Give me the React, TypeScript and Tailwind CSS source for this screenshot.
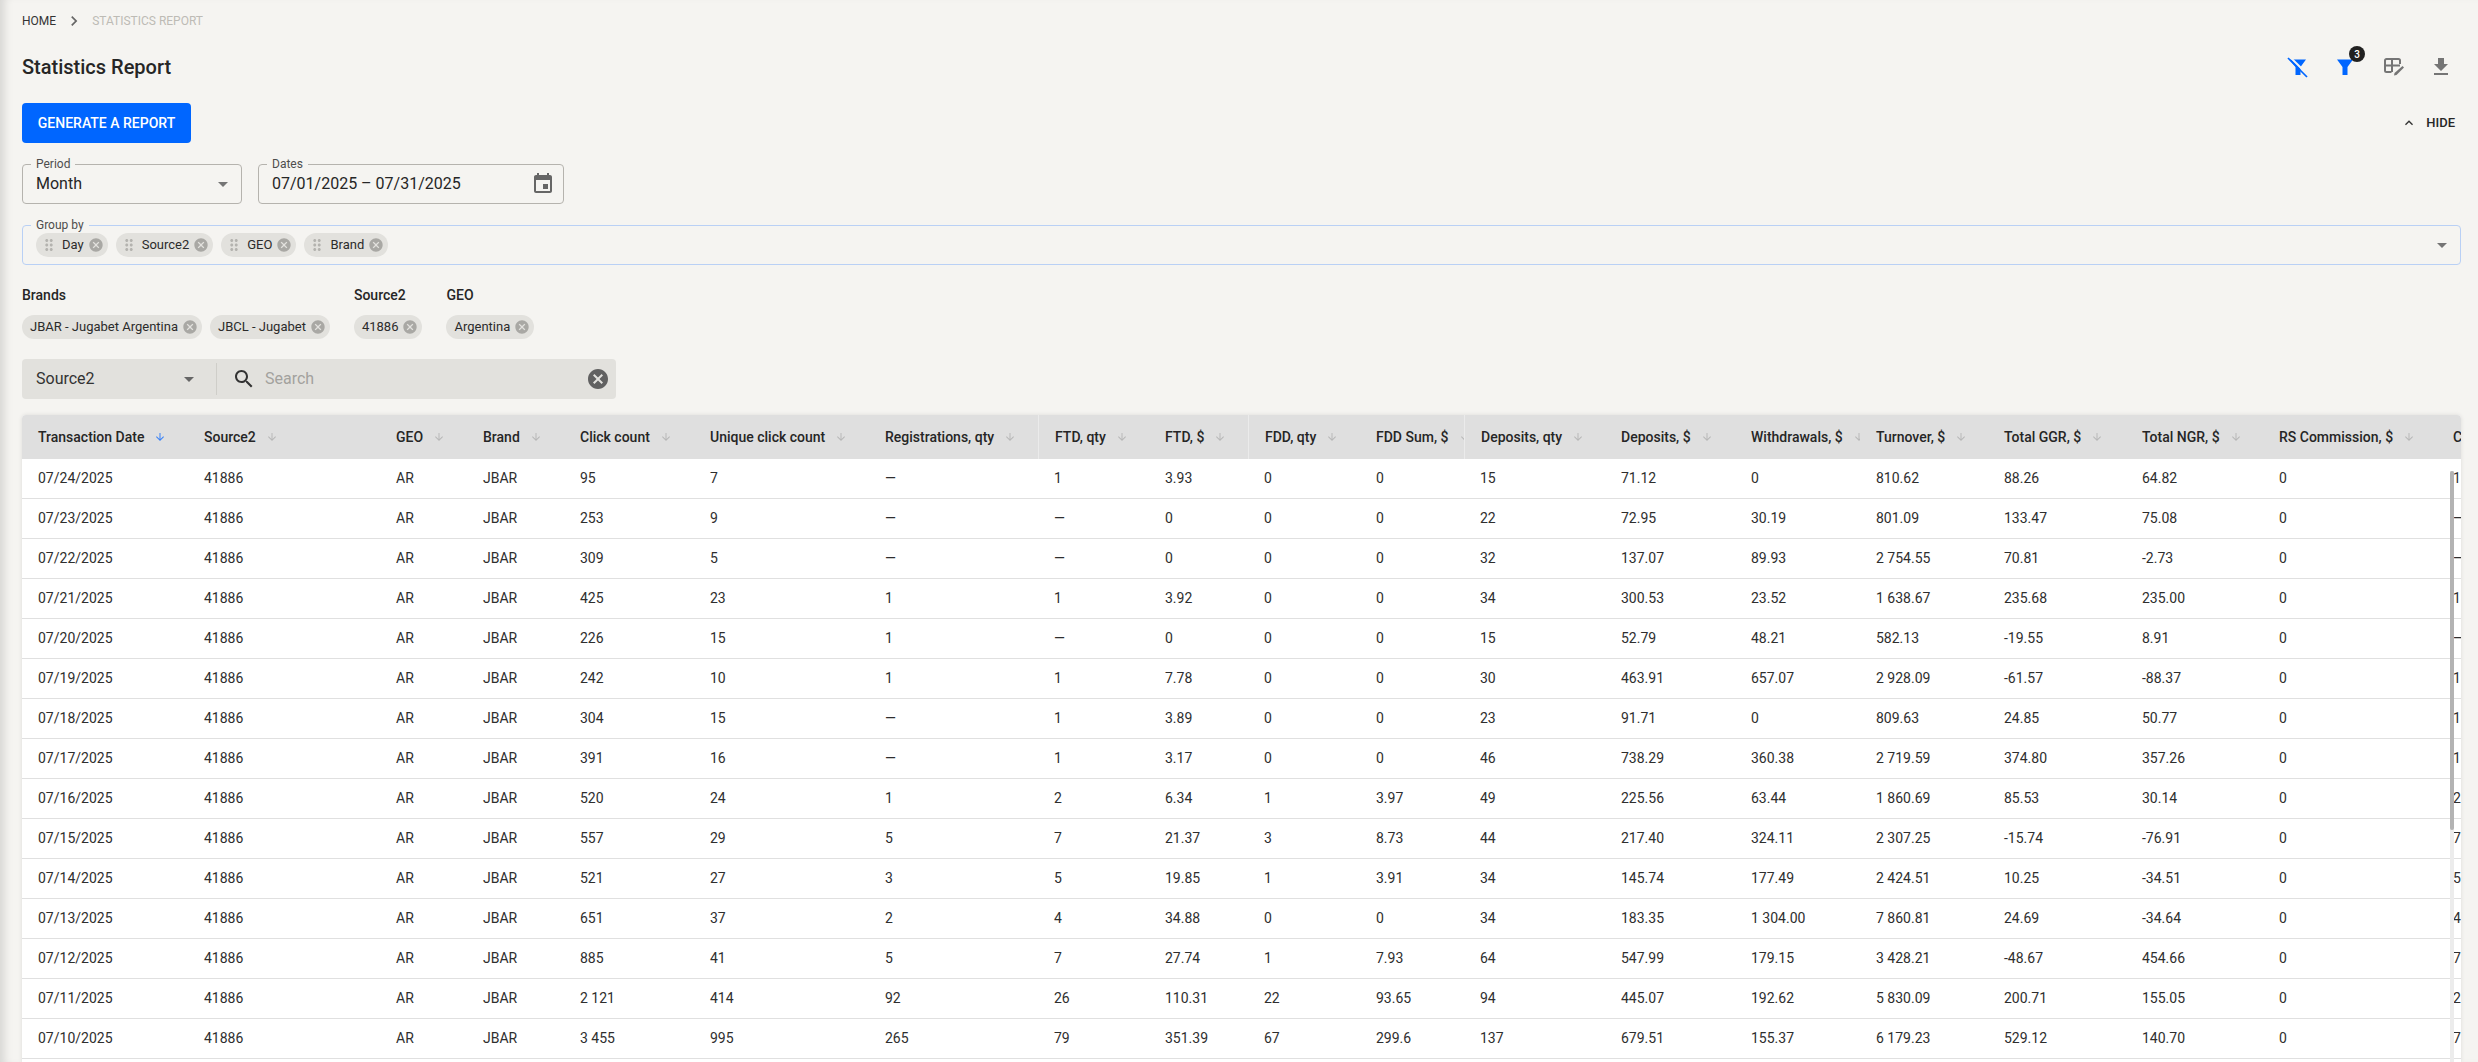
import React from "react";

const P = {
  cancel: "M12 2C6.47 2 2 6.47 2 12s4.47 10 10 10 10-4.47 10-10S17.53 2 12 2zm5 13.59L15.59 17 12 13.41 8.41 17 7 15.59 10.59 12 7 8.41 8.41 7 12 10.59 15.59 7 17 8.41 13.41 12 17 15.59z",
  drag: "M11 18c0 1.1-.9 2-2 2s-2-.9-2-2 .9-2 2-2 2 .9 2 2zm-2-8c-1.1 0-2 .9-2 2s.9 2 2 2 2-.9 2-2-.9-2-2-2zm0-6c-1.1 0-2 .9-2 2s.9 2 2 2 2-.9 2-2-.9-2-2-2zm6 4c1.1 0 2-.9 2-2s-.9-2-2-2-2 .9-2 2 .9 2 2 2zm0 2c-1.1 0-2 .9-2 2s.9 2 2 2 2-.9 2-2-.9-2-2-2zm0 6c-1.1 0-2 .9-2 2s.9 2 2 2 2-.9 2-2-.9-2-2-2z",
  drop: "M7 10l5 5 5-5z",
  event: "M17 12h-5v5h5v-5zM16 1v2H8V1H6v2H5c-1.11 0-1.99.9-1.99 2L3 19c0 1.1.89 2 2 2h14c1.1 0 2-.9 2-2V5c0-1.1-.9-2-2-2h-1V1h-2zm3 18H5V8h14v11z",
  search: "M15.5 14h-.79l-.28-.27C15.41 12.59 16 11.11 16 9.5 16 5.91 13.09 3 9.5 3S3 5.91 3 9.5 5.91 16 9.5 16c1.61 0 3.09-.59 4.23-1.57l.27.28v.79l5 4.99L20.49 19l-4.99-5zm-6 0C7.01 14 5 11.99 5 9.5S7.01 5 9.5 5 14 7.01 14 9.5 11.99 14 9.5 14z",
  chevron: "M10 6L8.59 7.41 13.17 12l-4.58 4.59L10 18l6-6z",
  less: "M12 8l-6 6 1.41 1.41L12 10.83l4.59 4.58L18 14z",
  down: "M20 12l-1.41-1.41L13 16.17V4h-2v12.17l-5.58-5.59L4 12l8 8 8-8z",
  download: "M5 20h14v-2H5v2zM19 9h-4V3H9v6H5l7 7 7-7z",
};

function Ico({ d, className }: { d: string; className: string }) {
  return (
    <svg viewBox="0 0 24 24" fill="currentColor" className={"shrink-0 " + className}>
      <path d={d} />
    </svg>
  );
}

function Chip({ label, drag }: { label: string; drag?: boolean }) {
  return (
    <div className={"flex h-6 items-center rounded-full bg-[#e2e1dd] pr-1 text-[13px] text-[#2b2b2b] " + (drag ? "pl-1" : "pl-2")}>
      {drag && <Ico d={P.drag} className="mr-1 h-[18px] w-[18px] text-[#b4b3af]" />}
      <span className="mr-1 whitespace-nowrap">{label}</span>
      <Ico d={P.cancel} className="h-4 w-4 text-[#a9a8a4]" />
    </div>
  );
}

function Field({ label, className, children }: { label: string; className: string; children: React.ReactNode }) {
  return (
    <div className={"relative flex h-10 items-center rounded border " + className}>
      <span className="absolute left-[8px] top-[-9px] bg-[#f5f4f1] px-[5px] text-xs leading-[16px] text-[#4d4d4d]">{label}</span>
      {children}
    </div>
  );
}

const cols: { t: string; w: string; sep?: boolean }[] = [
  { t: "Transaction Date", w: "w-[166px]" },
  { t: "Source2", w: "w-[192px]" },
  { t: "GEO", w: "w-[87px]" },
  { t: "Brand", w: "w-[97px]" },
  { t: "Click count", w: "w-[130px]" },
  { t: "Unique click count", w: "w-[175px]" },
  { t: "Registrations, qty", w: "w-[169px]" },
  { t: "FTD, qty", w: "w-[111px]", sep: true },
  { t: "FTD, $", w: "w-[99px]" },
  { t: "FDD, qty", w: "w-[112px]", sep: true },
  { t: "FDD Sum, $", w: "w-[104px]" },
  { t: "Deposits, qty", w: "w-[141px]", sep: true },
  { t: "Deposits, $", w: "w-[130px]" },
  { t: "Withdrawals, $", w: "w-[125px]" },
  { t: "Turnover, $", w: "w-[128px]" },
  { t: "Total GGR, $", w: "w-[138px]" },
  { t: "Total NGR, $", w: "w-[137px]" },
  { t: "RS Commission, $", w: "w-[174px]" },
  { t: "C", w: "w-[24px]" },
];

const rows: string[][] = [
  ["07/24/2025", "95", "7", "—", "1", "3.93", "0", "0", "15", "71.12", "0", "810.62", "88.26", "64.82", "0", "1"],
  ["07/23/2025", "253", "9", "—", "—", "0", "0", "0", "22", "72.95", "30.19", "801.09", "133.47", "75.08", "0", "—"],
  ["07/22/2025", "309", "5", "—", "—", "0", "0", "0", "32", "137.07", "89.93", "2 754.55", "70.81", "-2.73", "0", "—"],
  ["07/21/2025", "425", "23", "1", "1", "3.92", "0", "0", "34", "300.53", "23.52", "1 638.67", "235.68", "235.00", "0", "1"],
  ["07/20/2025", "226", "15", "1", "—", "0", "0", "0", "15", "52.79", "48.21", "582.13", "-19.55", "8.91", "0", "—"],
  ["07/19/2025", "242", "10", "1", "1", "7.78", "0", "0", "30", "463.91", "657.07", "2 928.09", "-61.57", "-88.37", "0", "1"],
  ["07/18/2025", "304", "15", "—", "1", "3.89", "0", "0", "23", "91.71", "0", "809.63", "24.85", "50.77", "0", "1"],
  ["07/17/2025", "391", "16", "—", "1", "3.17", "0", "0", "46", "738.29", "360.38", "2 719.59", "374.80", "357.26", "0", "1"],
  ["07/16/2025", "520", "24", "1", "2", "6.34", "1", "3.97", "49", "225.56", "63.44", "1 860.69", "85.53", "30.14", "0", "2"],
  ["07/15/2025", "557", "29", "5", "7", "21.37", "3", "8.73", "44", "217.40", "324.11", "2 307.25", "-15.74", "-76.91", "0", "7"],
  ["07/14/2025", "521", "27", "3", "5", "19.85", "1", "3.91", "34", "145.74", "177.49", "2 424.51", "10.25", "-34.51", "0", "5"],
  ["07/13/2025", "651", "37", "2", "4", "34.88", "0", "0", "34", "183.35", "1 304.00", "7 860.81", "24.69", "-34.64", "0", "4"],
  ["07/12/2025", "885", "41", "5", "7", "27.74", "1", "7.93", "64", "547.99", "179.15", "3 428.21", "-48.67", "454.66", "0", "7"],
  ["07/11/2025", "2 121", "414", "92", "26", "110.31", "22", "93.65", "94", "445.07", "192.62", "5 830.09", "200.71", "155.05", "0", "2"],
  ["07/10/2025", "3 455", "995", "265", "79", "351.39", "67", "299.6", "137", "679.51", "155.37", "6 179.23", "529.12", "140.70", "0", "7"],
];

export default function App() {
  return (
    <div className="flex h-screen flex-col overflow-hidden bg-[#f5f4f1] pl-[22px] pr-[17px] font-['Roboto',sans-serif] text-[#262626] shadow-[inset_10px_0_10px_-6px_rgba(0,0,0,0.13)]">
      <nav className="flex h-[42px] shrink-0 items-center text-xs uppercase">
        <span className="text-[#333333]">Home</span>
        <Ico d={P.chevron} className="mx-2 h-5 w-5 text-[#666666]" />
        <span className="text-[#bdbbb5]">Statistics Report</span>
      </nav>

      <div className="flex h-[50px] shrink-0 items-center justify-between">
        <h1 className="text-xl font-medium text-[#262626]">Statistics Report</h1>
        <div className="mr-[-4px] flex items-center">
          <div className="flex h-12 w-[49px] items-center justify-center text-[#0066ff]">
            <svg viewBox="0 0 24 24" className="h-6 w-6">
              <path fill="currentColor" d="M4 4.500h17L15.500 12v8h-5v-8z" />
              <path stroke="#f5f4f1" strokeWidth="2" d="M4.500 1.500l19 19" />
              <path stroke="currentColor" strokeWidth="1.700" d="M3 3l19 19" />
            </svg>
          </div>
          <div className="relative flex h-12 w-[48px] items-center justify-center text-[#0066ff]">
            <svg viewBox="0 0 24 24" className="h-6 w-6">
              <path fill="currentColor" d="M4 4.500h16L14.500 12v8h-5v-8z" />
            </svg>
            <span className="absolute left-[28px] top-[3px] flex h-4 w-4 items-center justify-center rounded-full bg-[#212121] text-[10px] font-medium text-white">3</span>
          </div>
          <div className="flex h-12 w-[47px] items-center justify-center text-[#757575]">
            <svg viewBox="0 0 24 24" className="h-6 w-6" fill="none" stroke="currentColor">
              <path strokeWidth="2" d="M10.500 17H5.500A1.500 1.500 0 0 1 4 15.500v-10A1.500 1.500 0 0 1 5.500 4h12A1.500 1.500 0 0 1 19 5.500V9M4 10.500h15M11 4.500V17" />
              <path fill="currentColor" stroke="none" d="M21.500 11l1.500 1.500-7.500 7.500-2.500.5.500-2.500z" />
            </svg>
          </div>
          <div className="flex h-12 w-[49px] items-center justify-center text-[#757575]">
            <Ico d={P.download} className="h-6 w-6" />
          </div>
        </div>
      </div>

      <div className="mt-[11px] flex h-10 shrink-0 items-center justify-between">
        <button className="h-10 w-[169px] rounded bg-[#0066ff] text-sm font-medium uppercase text-white">Generate a report</button>
        <div className="flex items-center pr-[6px]">
          <Ico d={P.less} className="mr-[9px] h-4 w-4 text-[#333333]" />
          <span className="text-[13px] font-medium uppercase text-[#262626]">Hide</span>
        </div>
      </div>

      <div className="mt-[21px] flex shrink-0 gap-4">
        <Field label="Period" className="w-[220px] border-[#b5b3ae]">
          <span className="ml-[13px] flex-1 text-base">Month</span>
          <Ico d={P.drop} className="mr-[6px] h-6 w-6 text-[#757575]" />
        </Field>
        <Field label="Dates" className="w-[306px] border-[#b5b3ae]">
          <span className="ml-[13px] flex-1 text-base">07/01/2025 – 07/31/2025</span>
          <Ico d={P.event} className="mr-[8px] h-6 w-6 text-[#666666]" />
        </Field>
      </div>

      <div className="mt-[21px] shrink-0">
        <Field label="Group by" className="border-[#b9d0f5]">
          <div className="ml-[13px] flex flex-1 gap-2">
            <Chip drag label="Day" />
            <Chip drag label="Source2" />
            <Chip drag label="GEO" />
            <Chip drag label="Brand" />
          </div>
          <Ico d={P.drop} className="mr-[6px] h-6 w-6 text-[#757575]" />
        </Field>
      </div>

      <div className="mt-[20px] flex shrink-0 gap-6">
        <div>
          <div className="h-5 text-sm font-medium leading-5">Brands</div>
          <div className="mt-[10px] flex gap-2">
            <Chip label="JBAR - Jugabet Argentina" />
            <Chip label="JBCL - Jugabet" />
          </div>
        </div>
        <div>
          <div className="h-5 text-sm font-medium leading-5">Source2</div>
          <div className="mt-[10px] flex gap-2">
            <Chip label="41886" />
          </div>
        </div>
        <div>
          <div className="h-5 text-sm font-medium leading-5">GEO</div>
          <div className="mt-[10px] flex gap-2">
            <Chip label="Argentina" />
          </div>
        </div>
      </div>

      <div className="mt-[20px] flex h-10 w-[594px] shrink-0 items-center rounded bg-[#e2e1dd]">
        <div className="flex w-[194px] shrink-0 items-center">
          <span className="ml-[14px] flex-1 text-base text-[#333333]">Source2</span>
          <Ico d={P.drop} className="mr-[15px] h-6 w-6 text-[#666666]" />
        </div>
        <div className="h-[32px] w-px bg-[#cfcec9]" />
        <Ico d={P.search} className="ml-[15px] h-6 w-6 text-[#333333]" />
        <span className="ml-[9px] flex-1 text-base text-[#a3a29e]">Search</span>
        <Ico d={P.cancel} className="mr-[6px] h-6 w-6 text-[#616161]" />
      </div>

      <div className="relative mt-4 min-h-0 flex-1 overflow-hidden rounded-t bg-white shadow-[0_0_4px_rgba(0,0,0,0.1)]">
        <table className="w-[2439px] table-fixed border-separate border-spacing-0 text-left text-sm">
          <colgroup>
            {cols.map((c) => (
              <col key={c.t} className={c.w} />
            ))}
          </colgroup>
          <thead>
            <tr>
              {cols.map((c, i) => (
                <th
                  key={c.t}
                  className={
                    "h-[44px] overflow-hidden whitespace-nowrap bg-[#dfdfdf] pl-4 font-medium text-[#262626]" +
                    (c.sep ? " border-l border-[#ebebeb]" : "")
                  }
                >
                  <div className="flex items-center">
                    <span>{c.t}</span>
                    {i < 18 && (
                      <Ico d={P.down} className={"ml-[10px] h-3 w-3 " + (i === 0 ? "text-[#3b82f6]" : "text-[#b8b8b8]")} />
                    )}
                  </div>
                </th>
              ))}
            </tr>
          </thead>
          <tbody>
            {rows.map((r) => {
              const cells = [r[0], "41886", "AR", "JBAR", ...r.slice(1)];
              return (
                <tr key={r[0]}>
                  {cells.map((v, i) => (
                    <td key={i} className="h-10 overflow-hidden whitespace-nowrap border-b border-[#e0e0e0] pb-[2px] pl-4 text-[#2e2e2e]">
                      {v}
                    </td>
                  ))}
                </tr>
              );
            })}
          </tbody>
        </table>
        <div className="absolute bottom-0 right-[7px] top-[56px] w-1 bg-[#ececec]">
          <div className="h-[359px] rounded-sm bg-[#b3b3b3]" />
        </div>
      </div>
    </div>
  );
}
